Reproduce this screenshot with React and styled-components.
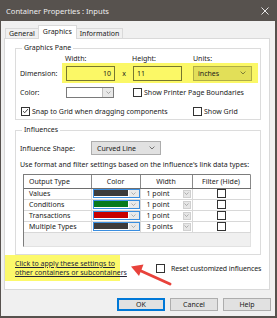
import React from 'react'
import styled, { createGlobalStyle } from 'styled-components'

const GlobalStyle = createGlobalStyle`
  html, body { margin: 0; padding: 0; background: #fff; }
  body { font-family: "Noto Sans", "Liberation Sans", sans-serif; }
  * { box-sizing: border-box; }
`

const Chevron = ({ size = 6, color = '#444' }) => (
  <svg width={size} height={size * 0.6} viewBox="0 0 10 6">
    <polyline points="1,1 5,5 9,1" fill="none" stroke={color} strokeWidth="1.2" />
  </svg>
)

function Check({ checked }) {
  return (
    <Box>
      {checked && (
        <svg width="8" height="8" viewBox="0 0 8 8">
          <polyline points="1.2,4.2 3.1,6 6.8,1.8" fill="none" stroke="#222" strokeWidth="1" />
        </svg>
      )}
    </Box>
  )
}

const rows = [
  { name: 'Values', color: '#3b3b3b', width: '1 point' },
  { name: 'Conditions', color: '#077a1c', width: '1 point' },
  { name: 'Transactions', color: '#c80000', width: '1 point' },
  { name: 'Multiple Types', color: '#3d3b3b', width: '3 points' },
]

function App() {
  return (
    <>
      <GlobalStyle />
      <Window>
        <TitleBar>
          <span>Container Properties : Inputs</span>
          <svg width="8" height="8" viewBox="0 0 8 8">
            <path d="M0.5 0.5 L7.5 7.5 M7.5 0.5 L0.5 7.5" stroke="#e6e6e6" strokeWidth="1" />
          </svg>
        </TitleBar>

        <Tabs>
          <Tab>General</Tab>
          <Tab active>Graphics</Tab>
          <Tab>Information</Tab>
        </Tabs>

        <Panel>
          <Group>
            <Legend>Graphics Pane</Legend>
            <HeaderRow>
              <HeadLabel w={45} />
              <HeadLabel w={67}>Width:</HeadLabel>
              <HeadLabel w={61}>Height:</HeadLabel>
              <HeadLabel>Units:</HeadLabel>
            </HeaderRow>
            <Row h={20}>
              <Label w={42}>Dimension:</Label>
              <Highlight>
                <Input align="right">10</Input>
                <Times>x</Times>
                <Input>11</Input>
                <Units>
                  <span>inches</span>
                  <Chevron size={6} color="#55552a" />
                </Units>
              </Highlight>
            </Row>
            <Row h={11} mt={4}>
              <Label w={46}>Color:</Label>
              <ColorPicker>
                <ColorField />
                <ColorButton><Chevron size={5} color="#777" /></ColorButton>
              </ColorPicker>
              <CheckLabel ml={19}>
                <Check />
                Show Printer Page Boundaries
              </CheckLabel>
            </Row>
            <Row h={10} mt={8}>
              <CheckLabel ml={1} w={172}>
                <Check checked />
                Snap to Grid when dragging components
              </CheckLabel>
              <CheckLabel>
                <Check />
                Show Grid
              </CheckLabel>
            </Row>
          </Group>

          <Group mt={5} pb={7}>
            <Legend>Influences</Legend>
            <Row h={14} mt={4}>
              <Label w={71}>Influence Shape:</Label>
              <Select>
                <span>Curved Line</span>
                <Chevron size={6} color="#444" />
              </Select>
            </Row>
            <Note>Use format and filter settings based on the influence's link data types:</Note>
            <TableFrame>
              <Grid>
                <colgroup>
                  <col style={{ width: 67 }} />
                  <col style={{ width: 49 }} />
                  <col style={{ width: 52 }} />
                  <col style={{ width: 58 }} />
                </colgroup>
                <thead>
                  <tr>
                    <Th left>Output Type</Th>
                    <Th>Color</Th>
                    <Th>Width</Th>
                    <Th>Filter (Hide)</Th>
                  </tr>
                </thead>
                <tbody>
                  {rows.map(r => (
                    <tr key={r.name}>
                      <Td pl={5}>{r.name}</Td>
                      <Td>
                        <SwatchCombo>
                          <Swatch color={r.color} />
                          <SwatchButton><Chevron size={5} color="#888" /></SwatchButton>
                        </SwatchCombo>
                      </Td>
                      <Td>
                        <WidthCell>
                          <span>{r.width}</span>
                          <MiniButton><Chevron size={5} color="#888" /></MiniButton>
                        </WidthCell>
                      </Td>
                      <Td>
                        <Centered><Check /></Centered>
                      </Td>
                    </tr>
                  ))}
                </tbody>
              </Grid>
            </TableFrame>
          </Group>

          <Footer>
            <LinkNote>
              <Link href="#">Click to apply these settings to</Link>
              <Link href="#">other containers or subcontainers</Link>
            </LinkNote>
            <CheckLabel ml={36} gap={6}>
              <Check />
              <Tight>Reset customized influences</Tight>
            </CheckLabel>
          </Footer>
        </Panel>

        <Buttons>
          <Button primary>OK</Button>
          <Button>Cancel</Button>
          <Button>Help</Button>
        </Buttons>

        <Arrow width="277" height="318" viewBox="0 0 277 318">
          <line x1="170" y1="284" x2="140" y2="270.5" stroke="#e8423b" strokeWidth="3" strokeLinecap="round" />
          <polygon points="131,266.5 143.5,264.5 139,276" fill="#e8423b" />
        </Arrow>
      </Window>
    </>
  )
}

export default App

const Window = styled.div`
  position: relative;
  width: 277px;
  height: 318px;
  background: #f0f0f0;
  border: 1px solid #57524e;
  border-top: none;
  border-right-width: 2px;
  border-bottom-width: 2px;
  display: flex;
  flex-direction: column;
  font-size: 7px;
  color: #1a1a1a;
`

const TitleBar = styled.div`
  height: 21px;
  flex: none;
  background: #57524e;
  color: #eeeeee;
  font-size: 7.6px;
  display: flex;
  align-items: center;
  justify-content: space-between;
  padding: 0 6px 0 5px;
`

const Tabs = styled.div`
  display: flex;
  align-items: flex-end;
  height: 14px;
  margin-top: 4px;
  margin-bottom: -1px;
  padding-left: 4px;
  position: relative;
  z-index: 1;
`

const Tab = styled.div`
  height: ${p => (p.active ? '14px' : '11px')};
  padding: ${p => (p.active ? '0 4px 2px' : '0 3px')};
  margin: ${p => (p.active ? '0 -1px' : '0')};
  background: ${p => (p.active ? '#fff' : '#f0f0f0')};
  border: 1px solid #d9d9d9;
  border-bottom: ${p => (p.active ? 'none' : '1px solid #d9d9d9')};
  display: flex;
  align-items: center;
  position: relative;
  z-index: ${p => (p.active ? 2 : 1)};
`

const Panel = styled.div`
  height: 252px;
  margin: 0 5px 0 3px;
  background: #fff;
  border: 1px solid #d9d9d9;
  display: flex;
  flex-direction: column;
  padding-top: 4px;
`

const Group = styled.fieldset`
  margin: ${p => p.mt || 0}px 8px 0 10px;
  padding: 2px 4px ${p => (p.pb != null ? p.pb : 3)}px 4px;
  border: 1px solid #dcdcdc;
  min-width: 0;
`

const Legend = styled.legend`
  padding: 0 2px;
  margin-left: 2px;
  line-height: 10px;
`

const HeaderRow = styled.div`
  display: flex;
  height: 8px;
  line-height: 8px;
`

const HeadLabel = styled.div`
  width: ${p => (p.w ? `${p.w}px` : 'auto')};
  flex: none;
`

const Row = styled.div`
  display: flex;
  align-items: center;
  height: ${p => p.h}px;
  margin-top: ${p => p.mt || 0}px;
`

const Label = styled.div`
  width: ${p => p.w}px;
  flex: none;
`

const Highlight = styled.div`
  display: flex;
  align-items: center;
  height: 20px;
  padding: 0 6px 0 4px;
  background: #fbf866;
`

const Input = styled.div`
  width: 49px;
  height: 15px;
  border: 1px solid #77772f;
  display: flex;
  align-items: center;
  justify-content: ${p => (p.align === 'right' ? 'flex-end' : 'flex-start')};
  padding: 0 3px;
`

const Times = styled.div`
  width: 18px;
  text-align: center;
`

const Units = styled.div`
  width: 59px;
  height: 15px;
  margin-left: 11px;
  background: #e2df58;
  border: 1px solid #b0ad46;
  display: flex;
  align-items: center;
  justify-content: space-between;
  padding: 0 5px 0 4px;
`

const ColorPicker = styled.div`
  display: flex;
  height: 11px;
  width: 48px;
  border: 1px solid #7a7a7a;
`

const ColorField = styled.div`
  flex: 1;
  background: #fff;
`

const ColorButton = styled.div`
  width: 11px;
  background: #e8e8e8;
  border-left: 1px solid #bdbdbd;
  display: flex;
  align-items: center;
  justify-content: center;
`

const CheckLabel = styled.label`
  display: flex;
  align-items: center;
  gap: ${p => (p.gap != null ? p.gap : 2)}px;
  margin-left: ${p => p.ml || 0}px;
  width: ${p => (p.w ? `${p.w}px` : 'auto')};
  flex: none;
  white-space: nowrap;
`

const Tight = styled.span`
  letter-spacing: -0.1px;
`

const Box = styled.span`
  width: 9px;
  height: 9px;
  flex: none;
  border: 1px solid #333;
  background: #fff;
  display: inline-flex;
  align-items: center;
  justify-content: center;
`

const Select = styled.div`
  width: 70px;
  height: 14px;
  background: #e1e1e1;
  border: 1px solid #adadad;
  display: flex;
  align-items: center;
  justify-content: space-between;
  padding: 0 5px 0 5px;
`

const Note = styled.div`
  margin-top: 5px;
  line-height: 9px;
  white-space: nowrap;
`

const TableFrame = styled.div`
  margin: 5px 0 0 3px;
  width: 228px;
  height: 73px;
  border: 1px solid;
  border-color: #7c7c7c #e2e2e2 #e2e2e2 #7c7c7c;
  background: #f0f0f0;
`

const Grid = styled.table`
  width: 226px;
  border-collapse: collapse;
  table-layout: fixed;
  background: #fff;
`

const Th = styled.th`
  height: 13px;
  padding: 0 0 0 ${p => (p.left ? '5px' : '0')};
  font-weight: normal;
  text-align: ${p => (p.left ? 'left' : 'center')};
  border-right: 1px solid #8a8a8a;
  border-bottom: 1px solid #6e6e6e;
`

const Td = styled.td`
  height: 11px;
  padding: 0 0 0 ${p => p.pl || 0}px;
  border: 1px solid #d8d8d8;
  border-top: none;
  border-left: none;
  white-space: nowrap;
`

const SwatchCombo = styled.div`
  display: flex;
  height: 9px;
  margin-left: 1px;
  width: 47px;
  border: 1px solid #3a8ee0;
`

const Swatch = styled.div`
  flex: 1;
  background: ${p => p.color};
  border: 1px solid #fff;
  border-left-width: 0;
  border-top-width: 0;
`

const SwatchButton = styled.div`
  width: 10px;
  background: #e9e9e9;
  display: flex;
  align-items: center;
  justify-content: center;
`

const WidthCell = styled.div`
  display: flex;
  align-items: center;
  justify-content: space-between;
  padding: 0 1px 0 6px;
`

const MiniButton = styled.div`
  width: 8px;
  height: 8px;
  background: #e6e6e6;
  border: 1px solid #d0d0d0;
  display: flex;
  align-items: center;
  justify-content: center;
`

const Centered = styled.div`
  display: flex;
  justify-content: center;
`

const Footer = styled.div`
  display: flex;
  align-items: center;
`

const LinkNote = styled.div`
  width: 115px;
  height: 26px;
  padding: 4px 0 4px 10px;
  background: #fcf96b;
  display: flex;
  flex-direction: column;
`

const Link = styled.a`
  color: #22243a;
  line-height: 9px;
  white-space: nowrap;
`

const Buttons = styled.div`
  display: flex;
  justify-content: flex-end;
  gap: 5px;
  margin-top: 8px;
  padding-right: 4px;
`

const Button = styled.button`
  width: 48px;
  height: 13px;
  padding: 0;
  font: inherit;
  color: #1a1a1a;
  background: #e1e1e1;
  border: 1px solid ${p => (p.primary ? '#0078d7' : '#adadad')};
  box-shadow: ${p => (p.primary ? 'inset 0 0 0 1px #0078d7' : 'none')};
`

const Arrow = styled.svg`
  position: absolute;
  left: -1px;
  top: 0;
  pointer-events: none;
`
